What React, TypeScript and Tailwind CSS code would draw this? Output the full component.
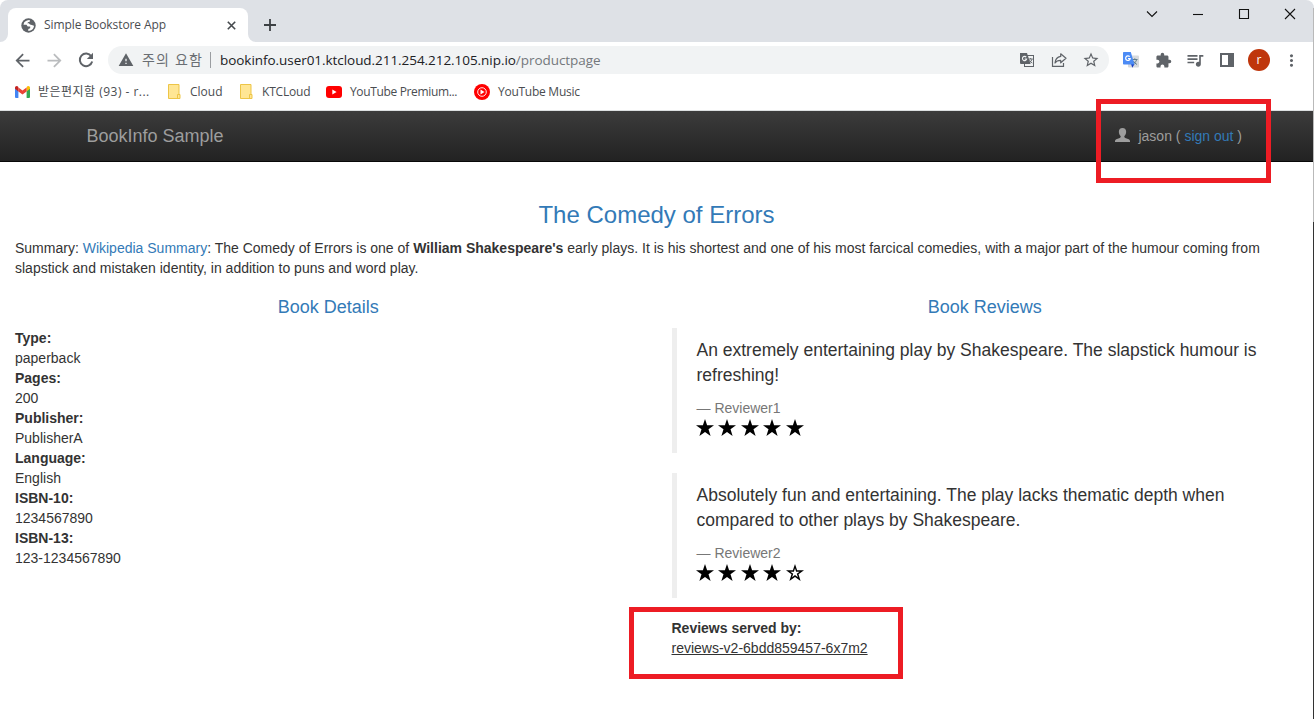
import type { ReactNode } from "react";
import {
  MdArrowBack,
  MdArrowForward,
  MdExtension,
  MdMoreVert,
  MdQueueMusic,
  MdStarOutline,
  MdWarning,
} from "react-icons/md";

const chromeFont = "font-['Open_Sans','Noto_Sans_CJK_KR',sans-serif]";

function Slot({ children }: { children: ReactNode }) {
  return <span className="flex h-7 w-8 shrink-0 items-center justify-center">{children}</span>;
}

function WindowButton({ path }: { path: string }) {
  return (
    <span className="flex h-7 w-[46px] items-center justify-center">
      <svg width="12" height="12" viewBox="0 0 12 12" fill="none" stroke="#111" strokeWidth="1.1">
        <path d={path} />
      </svg>
    </span>
  );
}

function Globe() {
  return (
    <svg width="15" height="15" viewBox="0 0 15 15" className="ml-px shrink-0">
      <circle cx="7.500" cy="7.500" r="7.200" fill="#5f6368" />
      <path d="M8.800 2.100C6.600 2 4.500 2.900 3.100 4.600L2.500 6.700H5.500L6.700 8.500H9.200V10.200L7.300 11V12.900C10.500 12.900 12.900 10.700 13 7.700L10.800 6.900 9 6.600 7.800 5.200H6.200L7.300 3.900H8.600Z" fill="#fff" />
    </svg>
  );
}

function Reload() {
  return (
    <svg width="16" height="16" viewBox="0 0 16 16">
      <path d="M13.300 4.200A6.300 6.300 0 1 0 14.200 9.500" fill="none" stroke="#5f6368" strokeWidth="2" />
      <path d="M15 .8v6.200H8.800z" fill="#5f6368" />
    </svg>
  );
}

function TranslateGrey() {
  return (
    <svg width="16" height="16" viewBox="0 0 16 16">
      <rect x="5.5" y="3.5" width="9" height="11" fill="#f1f3f4" stroke="#5f6368" />
      <path d="M1 1h7l3.600 11H2a1 1 0 0 1-1-1z" fill="#5f6368" />
      <path d="M7.200 5.200A2.100 2.100 0 1 0 7.600 7H5.600" fill="none" stroke="#f1f3f4" strokeWidth="1.1" />
      <path d="M9.600 7h4.200M11.600 6v1M13 7.200c-.4 1.600-1.300 2.700-2.600 3.600M10.500 8.300c.6 1.200 1.500 2 2.800 2.700" fill="none" stroke="#5f6368" strokeWidth=".9" />
    </svg>
  );
}

function TranslateColor() {
  return (
    <svg width="16" height="16" viewBox="0 0 16 16">
      <rect x="5" y="3.500" width="11" height="12" rx="1" fill="#d8dadd" />
      <path d="M9 7.500h5.500M11.800 6.300v1.200M13.600 7.700c-.6 2-1.800 3.400-3.600 4.600M10.300 9c.8 1.500 2 2.600 3.700 3.500" fill="none" stroke="#607f8c" />
      <path d="M8 12h3.500L9.300 15.800z" fill="#1a3fc4" />
      <path d="M.8 0h7l3.700 12.500H.8a.8.8 0 0 1-.8-.8V.8A.8.8 0 0 1 .8 0z" fill="#4c8bf5" />
      <path d="M6.700 4.700A2.300 2.300 0 1 0 7.200 6.600H5" fill="none" stroke="#fff" strokeWidth="1.200" />
    </svg>
  );
}

function Share() {
  return (
    <svg width="16" height="16" viewBox="0 0 16 16" fill="none" stroke="#5f6368" strokeWidth="1.200">
      <path d="M1.500 5v9.400h11V11" />
      <path d="M9.700 1.800 15 6.300l-5.300 4.500V8.300C7 8.300 5.200 9 4 11c.3-3.700 2.300-6 5.700-6.600z" strokeLinejoin="round" />
    </svg>
  );
}

function Gmail() {
  return (
    <svg width="15" height="12" viewBox="0 0 15 12" className="shrink-0">
      <path d="M0 2v9a1 1 0 0 0 1 1h2.400V4.500z" fill="#4285f4" />
      <path d="M15 2v9a1 1 0 0 1-1 1h-2.400V4.500z" fill="#34a853" />
      <path d="M11.600 1.400v4L15 2.800V1.900C15 .2 13.200-.5 12 .6z" fill="#fbbc04" />
      <path d="M3.400 5.400v-4L7.500 4.500l4.100-3.100v4L7.500 8.500z" fill="#ea4335" />
      <path d="M0 1.900v.9l3.400 2.600v-4L3 .6C1.800-.5 0 .2 0 1.900z" fill="#c5221f" />
    </svg>
  );
}

function Folder() {
  return (
    <svg width="13" height="15" viewBox="0 0 13 15" className="ml-px shrink-0">
      <path d="M.5.500h10.500v10h1v4H.5z" fill="#ffe694" stroke="#edc547" />
      <path d="M9.500 14v-3.500h1.500" fill="none" stroke="#edc547" />
    </svg>
  );
}

function YouTube() {
  return (
    <svg width="16" height="12" viewBox="0 0 16 12" className="shrink-0">
      <rect width="16" height="12" rx="3" fill="#f00" />
      <path d="M6.300 3.500v5l4.300-2.500z" fill="#fff" />
    </svg>
  );
}

function YouTubeMusic() {
  return (
    <svg width="16" height="16" viewBox="0 0 16 16" className="shrink-0">
      <circle cx="8" cy="8" r="8" fill="#f00" />
      <circle cx="8" cy="8" r="4.300" fill="none" stroke="#fff" strokeWidth=".9" />
      <path d="M6.500 5.500v5L10.500 8z" fill="#fff" />
    </svg>
  );
}

function Star({ filled }: { filled: boolean }) {
  return (
    <svg width="18" height="17" viewBox="0 0 18 17">
      <path d="M9 0 11.100 6.300H18L12.500 10.300 14.600 17 9 13 3.400 17 5.500 10.300 0 6.300H6.900z" fill="#000" />
      {!filled && <path d="M9 4.300 10.100 7.700H13.600L10.800 9.800 11.900 13.200 9 11.100 6.100 13.200 7.200 9.800 4.400 7.700H7.900z" fill="#fff" />}
    </svg>
  );
}

function Bookmark({ icon, label, className }: { icon: ReactNode; label: string; className: string }) {
  return (
    <span className={`flex h-4 shrink-0 items-center whitespace-nowrap ${className}`}>
      {icon}
      <span>{label}</span>
    </span>
  );
}

function Review({ text, author, stars }: { text: string; author: string; stars: number }) {
  return (
    <blockquote className="mb-5 h-[125px] border-l-[5px] border-[#eee] px-5 py-2.5 text-[17.5px] leading-[25px]">
      <p className="mb-2.5">{text}</p>
      <small className="block text-sm leading-5 text-[#777]">— {author}</small>
      <div className="-ml-[0.5px] flex h-[25px] gap-[4.400px] pt-px">
        {[0, 1, 2, 3, 4].map((i) => (
          <Star key={i} filled={i < stars} />
        ))}
      </div>
    </blockquote>
  );
}

const details = [
  ["Type:", "paperback"],
  ["Pages:", "200"],
  ["Publisher:", "PublisherA"],
  ["Language:", "English"],
  ["ISBN-10:", "1234567890"],
  ["ISBN-13:", "123-1234567890"],
];

export default function App() {
  return (
    <div className="relative h-[719px] w-[1314px] overflow-hidden bg-white">
      <div className={`${chromeFont} text-xs text-[#4a4d51]`}>
        <div className="flex h-[42px] rounded-tl-lg rounded-tr-lg bg-[#dee1e6]">
          <svg width="8" height="8" viewBox="0 0 8 8" className="self-end">
            <path d="M8 0v8H0a8 8 0 0 0 8-8z" fill="#fff" />
          </svg>
          <div className="mt-2 flex w-60 items-center rounded-t-lg bg-white pl-3">
            <Globe />
            <span className="ml-2 w-[183px] shrink-0 whitespace-nowrap tracking-[-0.08px]">Simple Bookstore App</span>
            <svg width="9" height="9" viewBox="0 0 9 9" className="mt-px shrink-0">
              <path d="M.8.8 8.200 8.200M8.200.8.8 8.200" stroke="#45494d" strokeWidth="1.600" />
            </svg>
          </div>
          <svg width="8" height="8" viewBox="0 0 8 8" className="self-end">
            <path d="M0 0v8h8a8 8 0 0 1-8-8z" fill="#fff" />
          </svg>
          <svg width="12" height="12" viewBox="0 0 12 12" className="mt-[19px] ml-2">
            <path d="M6 0v12M0 6h12" stroke="#3c4043" strokeWidth="1.800" />
          </svg>
          <div className="ml-auto flex pr-px">
            <WindowButton path="M1 3.500 6 8.500 11 3.500" />
            <WindowButton path="M1 6.500H11" />
            <WindowButton path="M1.500 1.500h9v9h-9z" />
            <WindowButton path="M1 1 11 11M11 1 1 11" />
          </div>
        </div>

        <div className="flex h-9 items-center pl-1.5">
          <Slot><MdArrowBack size={21} color="#5f6368" /></Slot>
          <Slot><MdArrowForward size={21} color="#babcbe" /></Slot>
          <Slot><Reload /></Slot>
          <div className="ml-1.5 flex h-7 w-[1001px] items-center rounded-full bg-[#f1f3f4] pr-0.5 pl-2.5 text-sm">
            <MdWarning size={16} color="#5f6368" />
            <span className="ml-2 w-[68px] whitespace-nowrap tracking-[1.200px] text-[#6a6e73]">주의 요함</span>
            <span className="h-4 w-px bg-[#9a9da1]" />
            <span className="mt-px ml-[9px] whitespace-nowrap text-[13.500px] tracking-[-0.050px] text-[#202124]">
              bookinfo.user01.ktcloud.211.254.212.105.nip.io<span className="text-[#74787c]">/productpage</span>
            </span>
            <span className="ml-auto flex">
              <Slot><TranslateGrey /></Slot>
              <Slot><Share /></Slot>
              <Slot><MdStarOutline size={18} color="#5f6368" /></Slot>
            </span>
          </div>
          <div className="ml-1.5 flex">
            <Slot><TranslateColor /></Slot>
            <Slot><MdExtension size={17} color="#5f6368" /></Slot>
            <Slot><MdQueueMusic size={20} color="#5f6368" /></Slot>
            <Slot>
              <svg width="14" height="14" viewBox="0 0 14 14">
                <path d="M0 0h14v14H0zM2 2v10h6V2z" fill="#5f6368" fillRule="evenodd" />
              </svg>
            </Slot>
            <Slot>
              <span className="flex size-[22px] shrink-0 items-center justify-center rounded-full bg-[#bf360c] text-xs leading-none text-white">r</span>
            </Slot>
            <Slot><MdMoreVert size={19} color="#5f6368" /></Slot>
          </div>
        </div>

        <div className="flex h-[33px] items-center border-b border-[#dcdfe1] pb-[5px] pl-[15px]">
          <Bookmark icon={<Gmail />} label="받은편지함 (93) - r..." className="w-[152px] gap-2 tracking-[0.480px]" />
          <Bookmark icon={<Folder />} label="Cloud" className="w-[72px] gap-[9px]" />
          <Bookmark icon={<Folder />} label="KTCLoud" className="w-[87px] gap-[9px] tracking-[-0.200px]" />
          <Bookmark icon={<YouTube />} label="YouTube Premium..." className="w-[148px] gap-2 tracking-[-0.350px]" />
          <Bookmark icon={<YouTubeMusic />} label="YouTube Music" className="gap-2 tracking-[-0.260px]" />
        </div>
      </div>

      <div className="pr-px font-['Liberation_Sans',Arial,sans-serif] text-sm leading-5 text-[#333]">
        <nav className="mb-5 flex h-[51px] items-center justify-between border-b border-[#080808] bg-linear-to-b from-[#3c3c3c] to-[#222] pr-[71px] pl-[86.500px] text-[#9d9d9d]">
          <span className="text-lg leading-5">BookInfo Sample</span>
          <span className="flex items-center">
            <svg width="15" height="14" viewBox="0 0 14 14" preserveAspectRatio="none" className="mr-2 -mt-0.5">
              <path d="M7 0c2.300 0 3.400 1.500 3.400 3.700 0 1.900-.7 3.500-1.600 4.300-.3.900 0 1.500.8 1.900l3.200 1.300c.8.400 1.200 1 1.200 1.800v1H0v-1c0-.8.4-1.400 1.200-1.800l3.200-1.300c.8-.4 1.100-1 .8-1.900C4.300 7.200 3.600 5.600 3.600 3.700 3.600 1.500 4.700 0 7 0z" fill="#9d9d9d" />
            </svg>
            <span>jason ( <a className="text-[#337ab7]">sign out</a> )</span>
          </span>
        </nav>

        <main className="px-[15px] pt-5">
          <h3 className="mb-2.5 text-center text-2xl leading-[26.400px] text-[#337ab7]">The Comedy of Errors</h3>
          <p className="mb-2.5">
            Summary: <a className="text-[#337ab7]">Wikipedia Summary</a>: The Comedy of Errors is one of <b>William Shakespeare's</b> early
            plays. It is his shortest and one of his most farcical comedies, with a major part of the humour coming from slapstick and
            mistaken identity, in addition to puns and word play.
          </p>
          <div className="grid grid-cols-2 gap-[30px]">
            <section>
              <h4 className="my-2.5 text-center text-lg leading-[19.800px] text-[#337ab7]">Book Details</h4>
              <dl>
                {details.map(([term, value]) => (
                  <div key={term}>
                    <dt className="font-bold">{term}</dt>
                    <dd>{value}</dd>
                  </div>
                ))}
              </dl>
            </section>
            <section>
              <h4 className="my-2.5 text-center text-lg leading-[19.800px] text-[#337ab7]">Book Reviews</h4>
              <Review
                text="An extremely entertaining play by Shakespeare. The slapstick humour is refreshing!"
                author="Reviewer1"
                stars={5}
              />
              <Review
                text="Absolutely fun and entertaining. The play lacks thematic depth when compared to other plays by Shakespeare."
                author="Reviewer2"
                stars={4}
              />
              <dl>
                <dt className="font-bold">Reviews served by:</dt>
                <dd className="underline">reviews-v2-6bdd859457-6x7m2</dd>
              </dl>
            </section>
          </div>
        </main>
      </div>

      <div className="absolute top-2 right-0 h-[214px] w-px bg-[#b9b9b9]" />
      <div className="absolute top-[222px] right-0 bottom-0 w-px bg-[#333]" />
      <div className="absolute top-[99px] left-[1096px] h-[84px] w-[175px] border-[5px] border-[#ed1c24]" />
      <div className="absolute top-[607px] left-[629px] h-[72px] w-[274px] border-[5px] border-[#ed1c24]" />
    </div>
  );
}
